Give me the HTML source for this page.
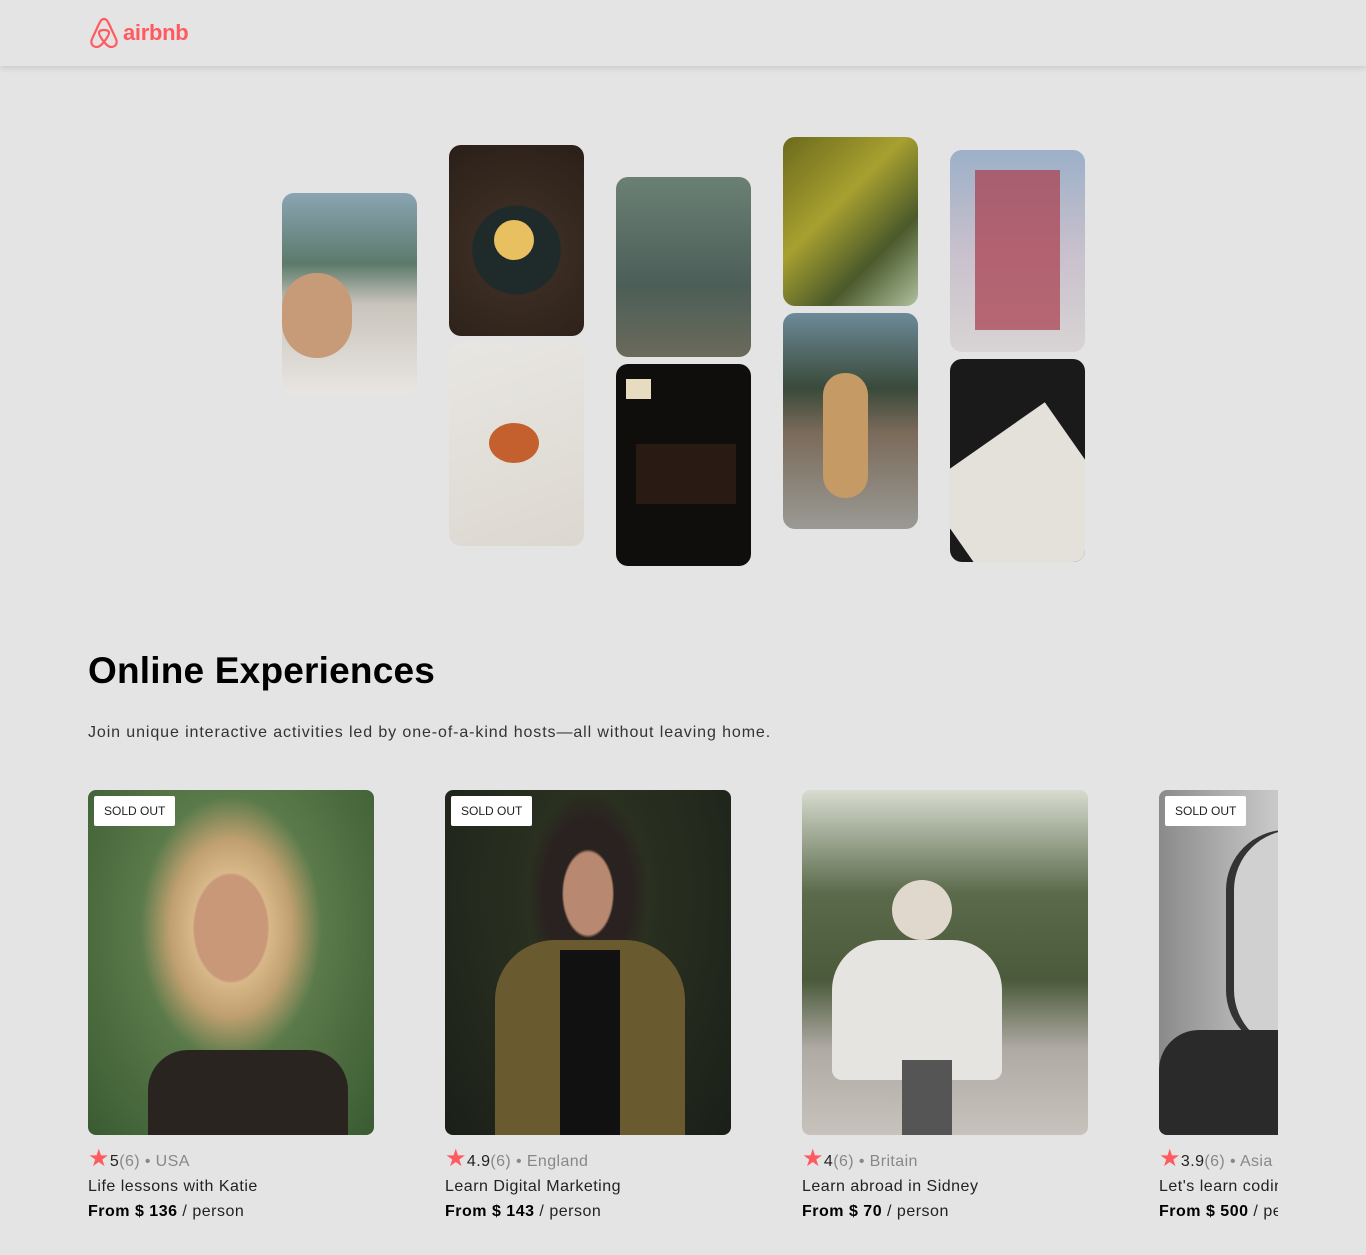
<!DOCTYPE html>
<html><head><meta charset="utf-8"><style>
*{margin:0;padding:0;box-sizing:border-box}
body{width:1366px;height:1255px;background:#e4e4e4;font-family:"Liberation Sans",sans-serif;position:relative;overflow:hidden;color:#222}
.hdr{position:absolute;left:0;top:0;width:1366px;height:66px;background:#e4e4e4;box-shadow:0 2px 6px rgba(0,0,0,.12)}
.logo{position:absolute;left:89px;top:16px;display:flex;align-items:center;color:#ff5a5f;font-weight:bold;font-size:22px;letter-spacing:-0.3px}
.ph{position:absolute;width:135px;border-radius:12px;overflow:hidden}
h1{position:absolute;left:88px;top:650px;font-size:37px;font-weight:bold;color:#000;letter-spacing:0.2px}
.sub{position:absolute;left:88px;top:724px;font-size:16px;color:#333;letter-spacing:0.9px;white-space:nowrap}
.card{position:absolute;top:790px;width:286px}
.img{height:345px;border-radius:8px;position:relative;overflow:hidden}
.badge{position:absolute;left:6px;top:6px;background:#fff;border-radius:2px;font-size:12px;padding:8px 10px;color:#222}
.meta{margin-top:10px;font-size:16px;color:#222;display:flex;align-items:flex-end;height:26px;letter-spacing:0.4px}
.meta .st{color:#ff5a5f;font-size:24px;line-height:24px;margin-right:0}
.meta .g{color:#888}
.t{font-size:16px;line-height:25px;margin-top:3px;color:#222;letter-spacing:0.5px}
.p{font-size:16px;line-height:25px;margin-top:0;color:#222;letter-spacing:0.5px}
.p b{color:#000}
</style></head><body>
<div class="hdr"><div class="logo">
<svg width="30" height="33" viewBox="0 0 30 33"><path d="M15 3C12 3 11 6 9 10L3 23C1 28 4 31 8 31C11 31 13 28 15 26C17 28 19 31 22 31C26 31 29 28 27 23L21 10C19 6 18 3 15 3Z M15 26C12 22 10 19 10 17C10 15 12 14 15 14C18 14 20 15 20 17C20 19 18 22 15 26Z" fill="none" stroke="#ff5a5f" stroke-width="2.2"/></svg>
<span style="margin-left:4px">airbnb</span></div></div>

<div class="ph" style="left:282px;top:193px;height:202px;background:linear-gradient(180deg,#8ba4b4 0%,#5c7a6a 35%,#c9c4bc 55%,#e9e6e2 100%)"><div style="position:absolute;left:0;top:80px;width:70px;height:85px;border-radius:40px;background:#c79a78"></div></div>
<div class="ph" style="left:449px;top:145px;height:191px;background:radial-gradient(circle at 50% 55%,#1f2a2a 0 35%,#3a2c22 36%,#2a1f18 100%)"><div style="position:absolute;left:45px;top:75px;width:40px;height:40px;border-radius:50%;background:#e8c060"></div></div>
<div class="ph" style="left:449px;top:343px;height:203px;background:linear-gradient(160deg,#e8e6e2,#dcd8d0)"><div style="position:absolute;left:40px;top:80px;width:50px;height:40px;border-radius:50%;background:#c4602e"></div></div>
<div class="ph" style="left:616px;top:177px;height:180px;background:linear-gradient(180deg,#6b8075,#4c5e58 60%,#6a6a5a)"></div>
<div class="ph" style="left:616px;top:364px;height:202px;background:#100e0d"><div style="position:absolute;left:10px;top:15px;width:25px;height:20px;background:#e8dcc0"></div><div style="position:absolute;left:20px;top:80px;width:100px;height:60px;background:#2a1a14"></div></div>
<div class="ph" style="left:783px;top:137px;height:169px;background:linear-gradient(135deg,#6a6a1c,#a8a030 40%,#4a5a2a 70%,#b0c0a0)"></div>
<div class="ph" style="left:783px;top:313px;height:216px;background:linear-gradient(180deg,#6c8a98 0%,#3a4a3a 35%,#7a6a5a 55%,#9a9a94 100%)"><div style="position:absolute;left:40px;top:60px;width:45px;height:125px;border-radius:22px;background:#c69a64"></div></div>
<div class="ph" style="left:950px;top:150px;height:202px;background:linear-gradient(180deg,#9cb0c8,#c8c0cc 50%,#d8d4d4)"><div style="position:absolute;left:25px;top:20px;width:85px;height:160px;background:#a83a4a;opacity:.7"></div></div>
<div class="ph" style="left:950px;top:359px;height:203px;background:#1a1a1a"><div style="position:absolute;left:10px;top:70px;width:150px;height:180px;background:#e4e0da;transform:rotate(-35deg)"></div></div>

<h1>Online Experiences</h1>
<div class="sub">Join unique interactive activities led by one-of-a-kind hosts—all without leaving home.</div>

<div class="card" style="left:88px"><div class="img" style="background:radial-gradient(ellipse at 50% 40%,#c89878 0 18%,#d8b888 19%,#c0a070 30%,#5a7a4a 45%,#3a5a32 100%)"><div style="position:absolute;left:60px;top:260px;width:200px;height:100px;background:#2a2420;border-radius:40px 40px 0 0"></div><div class="badge">SOLD OUT</div></div>
<div class="meta"><span class="st">★</span>5<span class="g">(6) • USA</span></div><div class="t">Life lessons with Katie</div><div class="p"><b>From $ 136</b> / person</div></div>

<div class="card" style="left:445px"><div class="img" style="background:radial-gradient(ellipse at 50% 30%,#b88870 0 12%,#2a2220 13% 22%,#2a3020 30%,#1a2018 100%)"><div style="position:absolute;left:50px;top:150px;width:190px;height:200px;background:#6a5a30;border-radius:60px 60px 0 0"></div><div style="position:absolute;left:115px;top:160px;width:60px;height:190px;background:#111"></div><div class="badge">SOLD OUT</div></div>
<div class="meta"><span class="st">★</span>4.9<span class="g">(6) • England</span></div><div class="t">Learn Digital Marketing</div><div class="p"><b>From $ 143</b> / person</div></div>

<div class="card" style="left:802px"><div class="img" style="background:linear-gradient(180deg,#d8dcd0 0%,#5a6a4a 30%,#4a5a3a 55%,#b0aaa4 75%,#c8c2bc 100%)"><div style="position:absolute;left:30px;top:150px;width:170px;height:140px;background:#e6e4e0;border-radius:50px 50px 10px 10px"></div><div style="position:absolute;left:90px;top:90px;width:60px;height:60px;border-radius:50%;background:#e0d8cc"></div><div style="position:absolute;left:100px;top:270px;width:50px;height:75px;background:#555"></div></div>
<div class="meta"><span class="st">★</span>4<span class="g">(6) • Britain</span></div><div class="t">Learn abroad in Sidney</div><div class="p"><b>From $ 70</b> / person</div></div>

<div style="position:absolute;left:1159px;top:790px;width:119px;height:450px;overflow:hidden">
<div class="card" style="left:0;top:0"><div class="img" style="background:linear-gradient(90deg,#8a8a8a,#c8c8c8 40%,#e0e0e0)"><div style="position:absolute;left:75px;top:40px;width:120px;height:220px;border-radius:60px;background:#d0d0d0;box-shadow:-8px 0 0 #333"></div><div style="position:absolute;left:0;top:240px;width:119px;height:105px;background:#2a2a2a;border-radius:40px 0 0 0"></div><div class="badge">SOLD OUT</div></div>
<div class="meta"><span class="st">★</span>3.9<span class="g">(6) • Asia</span></div><div class="t" style="white-space:nowrap">Let's learn coding</div><div class="p" style="white-space:nowrap"><b>From $ 500</b> / person</div></div></div>
</body></html>
